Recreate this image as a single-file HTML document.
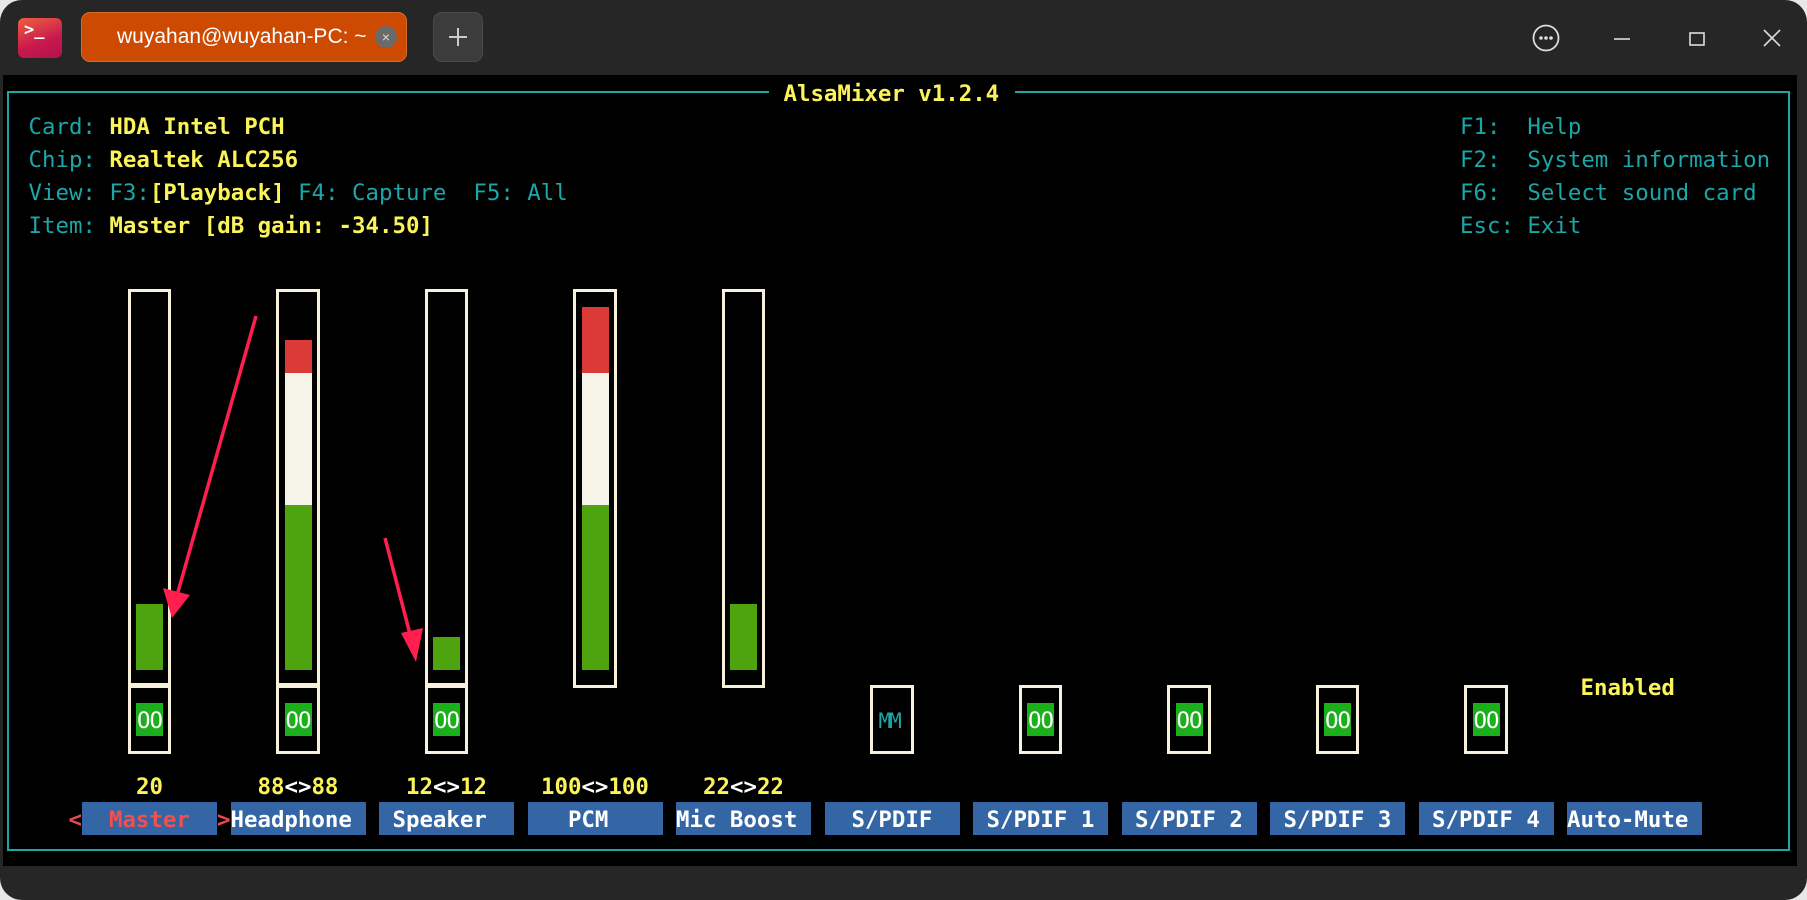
<!DOCTYPE html>
<html><head><meta charset="utf-8"><style>
*{margin:0;padding:0;box-sizing:border-box}
body{width:1807px;height:900px;background:#e8e8e8;overflow:hidden;position:relative;font-family:"DejaVu Sans Mono","Liberation Mono",monospace}
#win{position:absolute;left:0;top:0;width:1807px;height:900px;background:#262626;border-radius:22px 22px 22px 22px;overflow:hidden}
#term{position:absolute;left:3px;top:75px;width:1794px;height:791px;background:#000}
.a{position:absolute}
.t{position:absolute;font-size:22.4px;line-height:33px;height:33px;white-space:pre;color:#1ba6a8;transform:translateY(2px)}
.y{color:#fbf35a;font-weight:bold}
.w{color:#fff;font-weight:bold}
.fr{position:absolute;border:3px solid #f7f1dc}
.ln{position:absolute;background:#f7f1dc}
.g{position:absolute;background:#4ea40e}
.r{position:absolute;background:#db3a37}
.wh{position:absolute;background:#f6f4e8}
.oo{position:absolute;background:#1bb01b;color:#fff;font-size:22.4px;line-height:33px;width:27px;height:33px;text-align:center;letter-spacing:-1px;padding-top:2px}
.nm{position:absolute;top:801.5px;height:33px;width:135px;background:#3465a4;color:#fff;font-weight:bold;font-size:22.4px;line-height:33px;white-space:pre;padding-top:2px;overflow:hidden}
</style></head><body>
<div id="win">
<div class="a" style="left:18px;top:18px;width:44px;height:40px;border-radius:6px;background:linear-gradient(160deg,#f06040,#c8184e 60%,#b0144a)"></div>
<div class="a" style="left:24px;top:20px;color:#fff;font-family:'DejaVu Sans Mono',monospace;font-size:17px;font-weight:bold;line-height:20px">&gt;_</div>
<div class="a" style="left:81px;top:12px;width:326px;height:50px;border-radius:9px;background:#cc4a02;border:1px solid #d86a2a"></div>
<div class="a" style="left:117px;top:22px;color:#fff;font-family:'Liberation Sans',sans-serif;font-size:21px;line-height:30px;white-space:nowrap">wuyahan@wuyahan-PC: ~</div>
<div class="a" style="left:375px;top:26px;width:22px;height:22px;border-radius:50%;background:#6a6a6a;color:#ddd;font-family:'Liberation Sans',sans-serif;font-size:14px;line-height:22px;text-align:center">×</div>
<div class="a" style="left:433px;top:12px;width:50px;height:50px;border-radius:9px;background:#3c3c3c;border:1px solid #4a4a4a"></div>
<svg class="a" style="left:433px;top:12px" width="50" height="50"><path d="M25 16V34M16 25H34" stroke="#ccc" stroke-width="2"/></svg>
<svg class="a" style="left:1530px;top:22px" width="260" height="32">
<circle cx="16" cy="16" r="12.5" fill="none" stroke="#ddd" stroke-width="1.8"/>
<circle cx="11" cy="16" r="1.8" fill="#ddd"/><circle cx="16" cy="16" r="1.8" fill="#ddd"/><circle cx="21" cy="16" r="1.8" fill="#ddd"/>
<path d="M84 17H100" stroke="#ddd" stroke-width="1.6"/>
<rect x="160" y="11" width="14" height="12" fill="none" stroke="#ddd" stroke-width="1.6"/>
<path d="M234 8L250 24M250 8L234 24" stroke="#ddd" stroke-width="1.6"/>
</svg>
<div id="term"></div>
<div class="a" style="left:7px;top:91px;width:1783px;height:760px;border:2px solid #1ba6a8"></div>
<div class="a" style="left:769px;top:85px;width:246px;height:14px;background:#000"></div>
<div class="t y" style="left:770px;top:75.5px"> AlsaMixer v1.2.4 </div>
<div class="t" style="left:28.5px;top:108.5px">Card: <span class="y">HDA Intel PCH</span></div>
<div class="t" style="left:28.5px;top:141.5px">Chip: <span class="y">Realtek ALC256</span></div>
<div class="t" style="left:28.5px;top:174.5px">View: F3:<span class="y">[Playback]</span> F4: Capture  F5: All</div>
<div class="t" style="left:28.5px;top:207.5px">Item: <span class="y">Master [dB gain: -34.50]</span></div>
<div class="t" style="left:1460px;top:108.5px">F1:  Help</div>
<div class="t" style="left:1460px;top:141.5px">F2:  System information</div>
<div class="t" style="left:1460px;top:174.5px">F6:  Select sound card</div>
<div class="t" style="left:1460px;top:207.5px">Esc: Exit</div>

<div class="fr" style="left:127.75px;top:288.5px;width:43.5px;height:465px"></div>
<div class="ln" style="left:127.75px;top:683px;width:43.5px;height:5px"></div>
<div class="g" style="left:136px;top:603.5px;width:27px;height:66px"></div>
<div class="oo" style="left:136px;top:702.5px">OO</div>
<div class="fr" style="left:276.25px;top:288.5px;width:43.5px;height:465px"></div>
<div class="ln" style="left:276.25px;top:683px;width:43.5px;height:5px"></div>
<div class="r" style="left:284.5px;top:339.5px;width:27px;height:33px"></div>
<div class="wh" style="left:284.5px;top:372.5px;width:27px;height:132px"></div>
<div class="g" style="left:284.5px;top:504.5px;width:27px;height:165px"></div>
<div class="oo" style="left:284.5px;top:702.5px">OO</div>
<div class="fr" style="left:424.75px;top:288.5px;width:43.5px;height:465px"></div>
<div class="ln" style="left:424.75px;top:683px;width:43.5px;height:5px"></div>
<div class="g" style="left:433px;top:636.5px;width:27px;height:33px"></div>
<div class="oo" style="left:433px;top:702.5px">OO</div>
<div class="fr" style="left:573.25px;top:288.5px;width:43.5px;height:399px"></div>
<div class="r" style="left:581.5px;top:306.5px;width:27px;height:66px"></div>
<div class="wh" style="left:581.5px;top:372.5px;width:27px;height:132px"></div>
<div class="g" style="left:581.5px;top:504.5px;width:27px;height:165px"></div>
<div class="fr" style="left:721.75px;top:288.5px;width:43.5px;height:399px"></div>
<div class="g" style="left:730px;top:603.5px;width:27px;height:66px"></div>
<div class="fr" style="left:870.25px;top:684.5px;width:43.5px;height:69px"></div>
<div class="t" style="left:878.5px;top:702.5px;font-size:21px;letter-spacing:-2px">MM</div>
<div class="fr" style="left:1018.75px;top:684.5px;width:43.5px;height:69px"></div><div class="oo" style="left:1027px;top:702.5px">OO</div>
<div class="fr" style="left:1167.25px;top:684.5px;width:43.5px;height:69px"></div><div class="oo" style="left:1175.5px;top:702.5px">OO</div>
<div class="fr" style="left:1315.75px;top:684.5px;width:43.5px;height:69px"></div><div class="oo" style="left:1324px;top:702.5px">OO</div>
<div class="fr" style="left:1464.25px;top:684.5px;width:43.5px;height:69px"></div><div class="oo" style="left:1472.5px;top:702.5px">OO</div>
<div class="t y" style="left:1580.5px;top:669.5px">Enabled</div>

<div class="t y" style="left:136px;top:768.5px">20</div>
<div class="t y" style="left:257.5px;top:768.5px">88<span class="w">&lt;&gt;</span>88</div>
<div class="t y" style="left:406px;top:768.5px">12<span class="w">&lt;&gt;</span>12</div>
<div class="t y" style="left:541px;top:768.5px">100<span class="w">&lt;&gt;</span>100</div>
<div class="t y" style="left:703px;top:768.5px">22<span class="w">&lt;&gt;</span>22</div>

<div class="t" style="left:68.5px;top:801.5px;color:#f04848;font-weight:bold">&lt;</div>
<div class="nm" style="left:82px;color:#f05050">  Master</div>
<div class="t" style="left:217px;top:801.5px;color:#f04848;font-weight:bold">&gt;</div>
<div class="nm" style="left:230.5px">Headphone</div>
<div class="nm" style="left:379px"> Speaker</div>
<div class="nm" style="left:527.5px">   PCM</div>
<div class="nm" style="left:676px">Mic Boost</div>
<div class="nm" style="left:824.5px">  S/PDIF</div>
<div class="nm" style="left:973px"> S/PDIF 1</div>
<div class="nm" style="left:1121.5px"> S/PDIF 2</div>
<div class="nm" style="left:1270px"> S/PDIF 3</div>
<div class="nm" style="left:1418.5px"> S/PDIF 4</div>
<div class="nm" style="left:1567px">Auto-Mute</div>

<svg class="a" style="left:0;top:0" width="1807" height="900">
<path d="M256 316L178 592" stroke="#ff1f4f" stroke-width="3.5" fill="none"/>
<path d="M172 618L163 588L190 595Z" fill="#ff1f4f"/>
<path d="M385 538L411 638" stroke="#ff1f4f" stroke-width="3.5" fill="none"/>
<path d="M416 662L401 633L423 628Z" fill="#ff1f4f"/>
</svg>
</div>
</body></html>
